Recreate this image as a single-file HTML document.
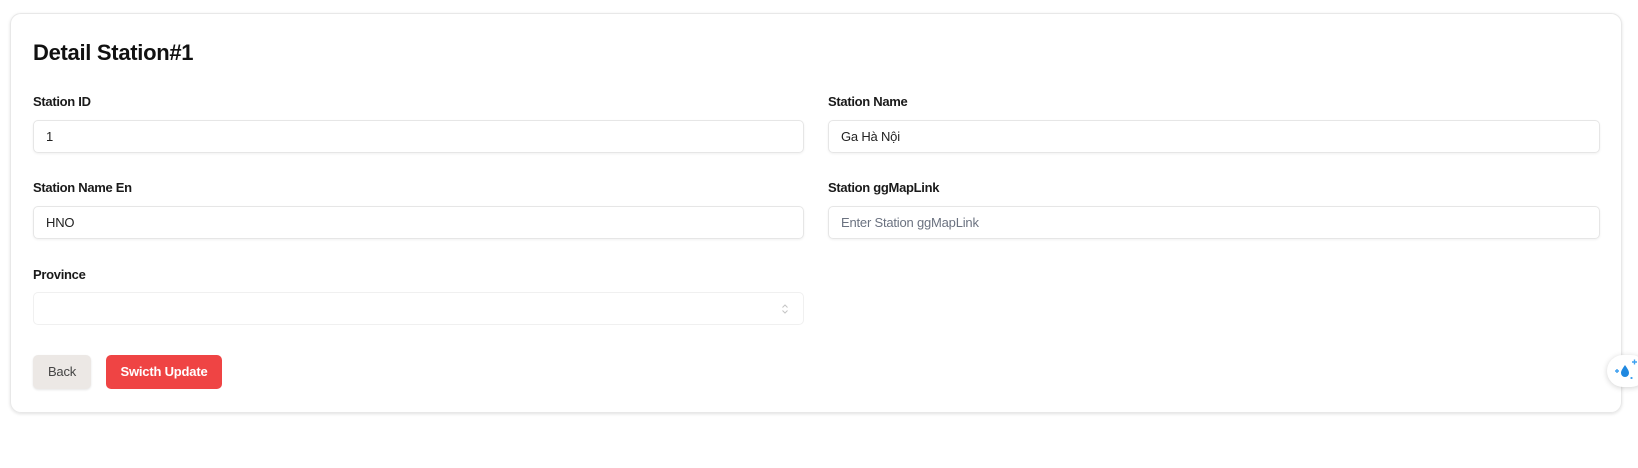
<!DOCTYPE html>
<html><head><meta charset="utf-8"><style>
*{box-sizing:border-box;margin:0;padding:0}
body{width:1638px;height:468px;background:#fff;font-family:"Liberation Sans",sans-serif;position:relative;overflow:hidden}
.card{position:absolute;left:10px;top:13px;width:1612px;height:400px;border:1px solid #e8e8e8;border-radius:11px;box-shadow:0 1px 3px rgba(0,0,0,.12)}
h1{position:absolute;left:33px;top:40px;font-size:22px;font-weight:bold;color:#111;letter-spacing:-0.3px}
.lbl{position:absolute;font-size:13px;font-weight:bold;color:#1a1a1a;letter-spacing:-0.3px}
.inp{position:absolute;height:33px;border:1px solid #e6e6e6;border-radius:5px;box-shadow:0 1px 2px rgba(0,0,0,.06);font-size:13px;color:#222;padding-left:12px;line-height:31px;letter-spacing:-0.2px}
.ph{color:#6b7280}
.btn{position:absolute;top:355px;height:34px;border-radius:5px;font-size:13px;line-height:34px;text-align:center;letter-spacing:-0.2px}
</style></head><body>
<div class="card"></div>
<h1>Detail Station#1</h1>
<div class="lbl" style="left:33px;top:94px">Station ID</div>
<div class="lbl" style="left:828px;top:94px">Station Name</div>
<div class="inp" style="left:33px;top:120px;width:771px">1</div>
<div class="inp" style="left:828px;top:120px;width:772px">Ga Hà Nội</div>
<div class="lbl" style="left:33px;top:180px">Station Name En</div>
<div class="lbl" style="left:828px;top:180px">Station ggMapLink</div>
<div class="inp" style="left:33px;top:206px;width:771px">HNO</div>
<div class="inp ph" style="left:828px;top:206px;width:772px">Enter Station ggMapLink</div>
<div class="lbl" style="left:33px;top:267px">Province</div>
<div class="inp" style="left:33px;top:292px;width:771px;border-color:#f0f0f0;box-shadow:none"><svg style="position:absolute;right:14px;top:10px" width="8" height="12" viewBox="0 0 8 12"><path d="M1.5 4.5L4 2l2.5 2.5M1.5 7.5L4 10l2.5-2.5" fill="none" stroke="#c4c4c4" stroke-width="1"/></svg></div>
<div class="btn" style="left:33px;width:58px;background:#ece8e5;color:#444;box-shadow:0 1px 2px rgba(0,0,0,.1)">Back</div>
<div class="btn" style="left:106px;width:116px;background:#ef4444;color:#fff;font-weight:bold">Swicth Update</div>
<div style="position:absolute;left:1607px;top:355px;width:40px;height:32px;background:#fff;border-radius:16px;box-shadow:0 1px 6px rgba(0,0,0,.18)">
<svg style="position:absolute;left:5px;top:3px" width="26" height="26" viewBox="0 0 26 26"><path d="M13 7C11 10 9 12.5 9 15a4 4 0 0 0 8 0C17 12.5 15 10 13 7z" fill="#1f88e0"/><path d="M3 13h4M5 11v4M20 4h5M22.5 1.5v5M18.5 20h2M19.5 19v2" stroke="#3fa0f0" stroke-width="1.4"/></svg></div>
</body></html>
